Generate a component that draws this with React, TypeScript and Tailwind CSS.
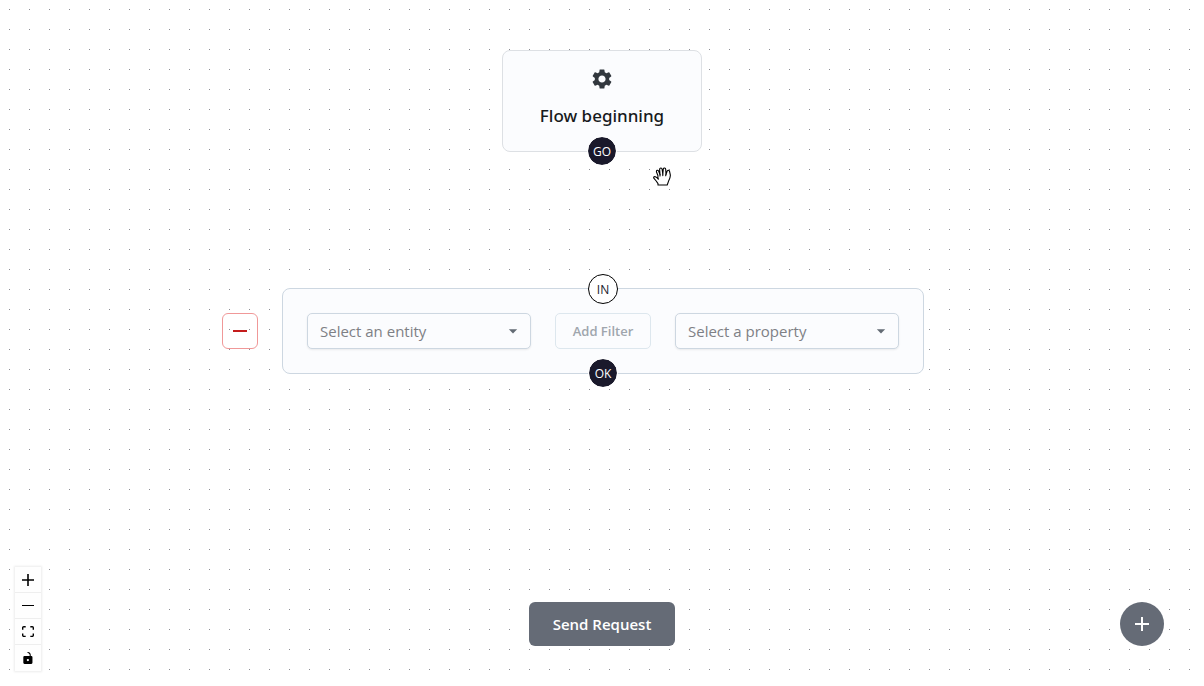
import type { ReactNode } from "react";
import { MdAdd, MdArrowDropDown, MdRemove, MdSettings } from "react-icons/md";

function DotGrid() {
  return (
    <svg className="absolute inset-0 h-full w-full" aria-hidden="true">
      <defs>
        <pattern id="dots" width="20" height="20" patternUnits="userSpaceOnUse">
          <rect x="9" y="9" width="1" height="1" fill="#8c8c93" />
        </pattern>
      </defs>
      <rect width="100%" height="100%" fill="url(#dots)" />
    </svg>
  );
}

function Handle({ label, kind }: { label: string; kind: "source" | "target" }) {
  return (
    <div
      className={
        kind === "source"
          ? "absolute bottom-0 left-1/2 flex size-[30px] -translate-x-1/2 translate-y-1/2 items-center justify-center rounded-full border border-white bg-[#1a192b] bg-clip-padding pt-0.5 text-xs text-white"
          : "absolute top-0 left-1/2 flex size-[30px] -translate-x-1/2 -translate-y-1/2 items-center justify-center rounded-full border border-black bg-white pt-0.5 text-xs text-[#1a192b]"
      }
    >
      {label}
    </div>
  );
}

function SelectBox({ label }: { label: string }) {
  return (
    <div className="relative w-56">
      <select
        aria-label={label}
        className="block h-9 w-full appearance-none rounded-[5px] border border-[#cdd7e1] bg-[#fbfcfe] pr-8 pl-3 text-[15px] text-[#7e8085] shadow-[0_1px_2px_rgba(21,21,21,0.08)]"
      >
        <option>{label}</option>
      </select>
      <MdArrowDropDown className="pointer-events-none absolute top-2 right-2 size-5 text-[#636b74]" />
    </div>
  );
}

function ControlButton({ label, children }: { label: string; children: ReactNode }) {
  return (
    <button
      type="button"
      aria-label={label}
      className="flex h-[26px] w-[26px] items-center justify-center border-b border-[#eeeeee] bg-[#fefefe] last:border-b-0"
    >
      {children}
    </button>
  );
}

export default function App() {
  return (
    <main className="relative flex min-h-screen flex-col overflow-hidden bg-white font-['Open_Sans','Noto_Sans',sans-serif] text-[#171a1c]">
      <DotGrid />

      <section className="absolute top-[50px] left-1/2 flex w-[200px] -translate-x-1/2 flex-col items-center gap-[11px] rounded-lg border border-[#dde0e4] bg-[#fbfcfe] pt-4 pb-[21px]">
        <MdSettings className="size-6 text-[#32383e]" />
        <h1 className="font-['Noto_Sans','Open_Sans',sans-serif] text-[17px] leading-7 font-medium">Flow beginning</h1>
        <Handle label="GO" kind="source" />
      </section>

      <div className="absolute top-[288px] left-[calc(50%-380px)] flex items-center gap-6">
        <button
          type="button"
          aria-label="Remove step"
          className="flex size-9 items-center justify-center rounded-md border border-[#f09898] text-[#c41c1c]"
        >
          <MdRemove className="size-6" />
        </button>
        <section className="relative flex gap-6 rounded-lg border border-[#cdd7e1] bg-[#fbfcfe] p-6">
          <Handle label="IN" kind="target" />
          <SelectBox label="Select an entity" />
          <button
            type="button"
            disabled
            className="h-9 w-24 rounded-[5px] border border-[#dde7ee] pt-0.5 text-[13px] font-semibold text-[#9fa6ad]"
          >
            Add Filter
          </button>
          <SelectBox label="Select a property" />
          <Handle label="OK" kind="source" />
        </section>
      </div>

      <svg
        className="absolute top-[167px] left-[calc(50%+51px)] h-[19px] w-[18px]"
        viewBox="0 0 18 19"
        fill="#fff"
        stroke="#000"
        strokeWidth="1.1"
        strokeLinejoin="round"
        strokeLinecap="round"
        aria-hidden="true"
      >
        <path d="M5 18V16.6L3.2 14L.8 11.2C.3 10 1.6 9.2 2.8 9.9L5 11.5L4.9 8.5L3.5 5C3.1 3.2 4.9 2.7 5.6 4.1L7 7.5L6.6 2.4C6.8.7 8.9.6 9.1 2.2L9.8 7L10.3 1.9C10.7.5 12.6.7 12.7 2.3L13 7.2L14.2 4C15.1 2.8 16.6 3.3 16.6 4.7L17.3 7.8C17.6 10 16.8 12 15.4 14.6L14.2 18Z" />
        <path d="M7 7.5V9M9.8 7V8.6M13 7.2L12.7 8.8M5 11.5L5.3 12.3" />
      </svg>

      <footer className="relative mt-auto grid grid-cols-[1fr_auto_1fr] items-end pr-10 pb-[15px] pl-[15px]">
        <nav aria-label="Canvas controls" className="w-[26px] shadow-[0_0_2px_1px_rgba(0,0,0,0.08)]">
          <ControlButton label="Zoom in">
            <svg viewBox="0 0 32 32" className="w-3">
              <path d="M32 18.133H18.133V32h-4.266V18.133H0v-4.266h13.867V0h4.266v13.867H32z" />
            </svg>
          </ControlButton>
          <ControlButton label="Zoom out">
            <svg viewBox="0 0 32 5" className="w-3">
              <path d="M0 0h32v4.2H0z" />
            </svg>
          </ControlButton>
          <ControlButton label="Fit view">
            <svg viewBox="0 0 32 30" className="w-3">
              <path d="M3.692 4.63c0-.53.4-.938.939-.938h5.215V0H4.708C2.13 0 0 2.054 0 4.63v5.216h3.692V4.631zM27.354 0h-5.2v3.692h5.17c.53 0 .984.4.984.939v5.215H32V4.631A4.624 4.624 0 0027.354 0zm.954 24.83c0 .532-.4.94-.939.94h-5.215v3.768h5.215c2.577 0 4.631-2.13 4.631-4.707v-5.139h-3.692v5.139zm-23.677.94c-.531 0-.939-.4-.939-.94v-5.138H0v5.139c0 2.577 2.13 4.707 4.708 4.707h5.138V25.77H4.631z" />
            </svg>
          </ControlButton>
          <ControlButton label="Toggle lock">
            <svg viewBox="0 0 25 32" className="h-3 w-2.5">
              <path d="M21.333 10.667H19.81V7.619C19.81 3.429 16.38 0 12.19 0c-4.114 1.828-1.37 2.133.305 2.438 1.676.305 4.42 2.59 4.42 5.181v3.048H3.047A3.056 3.056 0 000 13.714v15.238A3.056 3.056 0 003.048 32h18.285a3.056 3.056 0 003.048-3.048V13.714a3.056 3.056 0 00-3.048-3.047zM12.19 24.533a3.056 3.056 0 01-3.047-3.047 3.056 3.056 0 013.047-3.048 3.056 3.056 0 013.048 3.048 3.056 3.056 0 01-3.048 3.047z" />
            </svg>
          </ControlButton>
        </nav>
        <button
          type="button"
          className="mb-[25px] ml-[25px] h-11 rounded-md bg-[#656b76] px-6 text-[15px] font-semibold text-white"
        >
          Send Request
        </button>
        <button
          type="button"
          aria-label="Add step"
          className="mb-[25px] flex size-11 items-center justify-center justify-self-end rounded-full bg-[#656b76] text-white"
        >
          <MdAdd className="size-6" />
        </button>
      </footer>
    </main>
  );
}
